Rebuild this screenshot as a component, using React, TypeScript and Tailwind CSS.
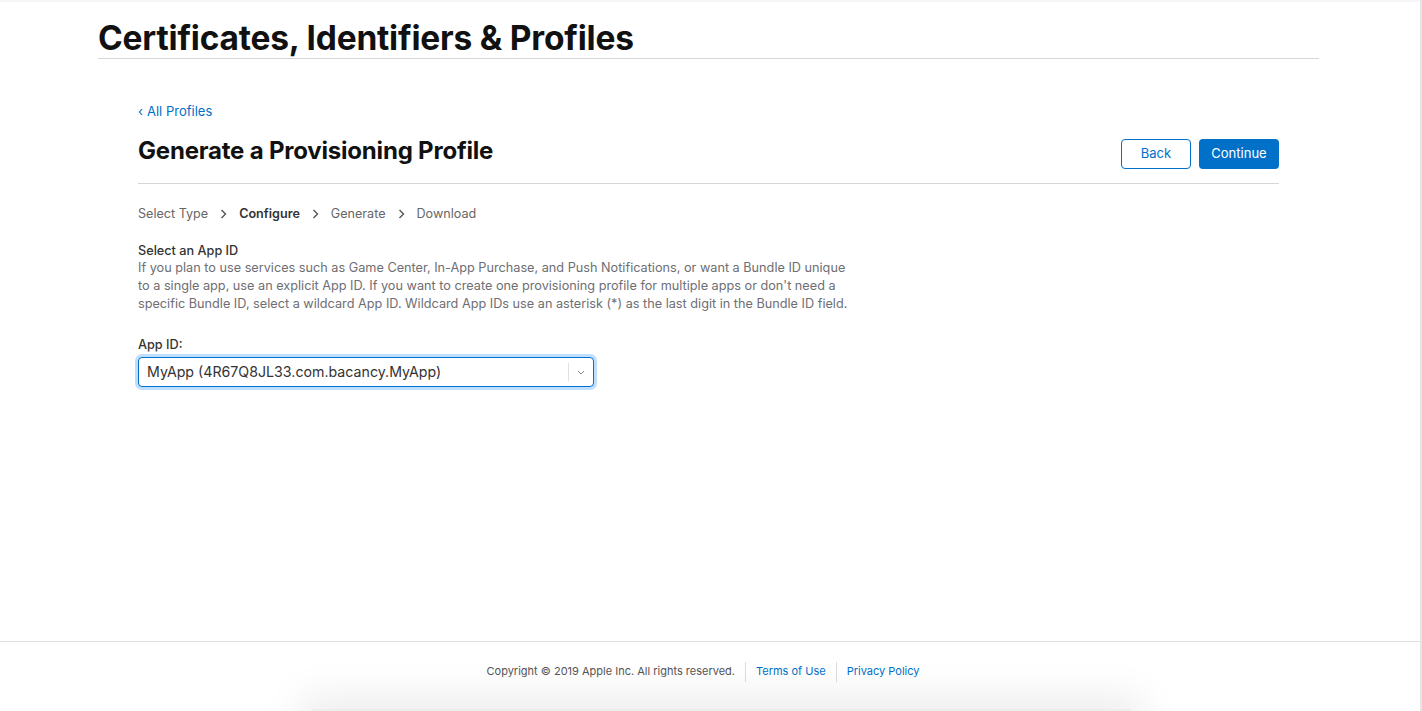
import React from "react";

export default function App() {
  return (
    <div
      className="relative h-[711px] w-[1422px] overflow-hidden bg-white text-[#1d1d1f]"
      style={{ fontFamily: "Inter, 'Noto Sans', sans-serif" }}
    >
      <div className="h-[2px] w-full bg-[#f5f5f7]" />
      <div className="absolute right-0 top-0 h-full w-[2px] bg-[#e5e5e5]" />

      <div className="flex h-[639px] flex-col">
        <div className="ml-[98px] w-[1221px]">
          <div className="flex h-[56px] items-end">
            <h1 className="text-[33.5px] font-bold leading-[40px] tracking-[-0.2px] text-[#111]">
              Certificates, Identifiers &amp; Profiles
            </h1>
          </div>
          <div className="h-px bg-[#d6d6d6]" />

          <div className="mx-[40px]">
            <div className="mt-[43px] flex h-[20px] items-center text-[13px] text-[#0070c9]">
              <span className="mr-[4px] text-[13px]">‹</span>All Profiles
            </div>
            <div className="mt-[9px] flex h-[46px] items-center justify-between">
              <h2 className="mb-[7px] text-[24px] font-bold tracking-[-0.2px] text-[#111]">
                Generate a Provisioning Profile
              </h2>
              <div className="flex gap-[8px]">
                <button className="h-[30px] w-[70px] rounded-[4px] border border-[#0070c9] bg-white text-[13px] text-[#0070c9]">
                  Back
                </button>
                <button className="h-[30px] w-[80px] rounded-[4px] bg-[#0070c9] text-[13px] text-white">
                  Continue
                </button>
              </div>
            </div>
            <div className="mt-[6px] h-px bg-[#d6d6d6]" />

            <div className="mt-[20px] flex h-[20px] items-center gap-[12px] text-[12.6px] text-[#666]">
              <span>Select Type</span>
              <Chevron />
              <span className="font-semibold text-[#333]">Configure</span>
              <Chevron />
              <span>Generate</span>
              <Chevron />
              <span>Download</span>
            </div>

            <div className="mt-[18px] text-[12.7px] leading-[17px] font-medium text-[#333]">
              Select an App ID
            </div>
            <p className="w-[760px] text-[12.7px] leading-[18px] text-[#6e6e73]">
              If you plan to use services such as Game Center, In-App Purchase, and Push Notifications, or want a Bundle ID unique
              <br />
              to a single app, use an explicit App ID. If you want to create one provisioning profile for multiple apps or don't need a
              <br />
              specific Bundle ID, select a wildcard App ID. Wildcard App IDs use an asterisk (*) as the last digit in the Bundle ID field.
            </p>

            <div className="mt-[23px] text-[12.7px] leading-[18px] font-medium text-[#333]">App ID:</div>
            <div className="mt-[3px] flex h-[30px] w-[456px] items-center rounded-[4px] border border-[#0070c9] bg-white shadow-[0_0_0_3px_rgba(0,125,250,0.25)]">
              <span className="flex-1 pl-[8px] text-[14.2px] text-[#333]">MyApp (4R67Q8JL33.com.bacancy.MyApp)</span>
              <div className="h-[18px] w-px bg-[#e0e0e0]" />
              <div className="flex w-[24px] items-center justify-center">
                <svg width="8" height="5" viewBox="0 0 8 5" fill="none">
                  <path d="M1 1l3 3 3-3" stroke="#888" strokeWidth="1" />
                </svg>
              </div>
            </div>
          </div>
        </div>
      </div>

      <div className="h-px w-full bg-[#e0e0e0]" />
      <div className="ml-[98px] flex h-[60px] w-[1221px] items-center justify-center pr-[11px] pb-[1px] text-[11px] text-[#555]">
        <span>Copyright © 2019 Apple Inc. All rights reserved.</span>
        <div className="mx-[10px] h-[20px] w-px bg-[#ddd]" />
        <span className="text-[#0070c9]">Terms of Use</span>
        <div className="mx-[10px] h-[20px] w-px bg-[#ddd]" />
        <span className="text-[#0070c9]">Privacy Policy</span>
      </div>

      <div className="absolute left-[312px] top-[709px] h-[30px] w-[818px] bg-[#eee] shadow-[0_0_40px_12px_rgba(0,0,0,0.08)]" />
    </div>
  );
}

function Chevron() {
  return (
    <svg width="7" height="10" viewBox="0 0 7 10" fill="none">
      <path d="M1.5 1l4 4-4 4" stroke="#555" strokeWidth="1.4" />
    </svg>
  );
}
